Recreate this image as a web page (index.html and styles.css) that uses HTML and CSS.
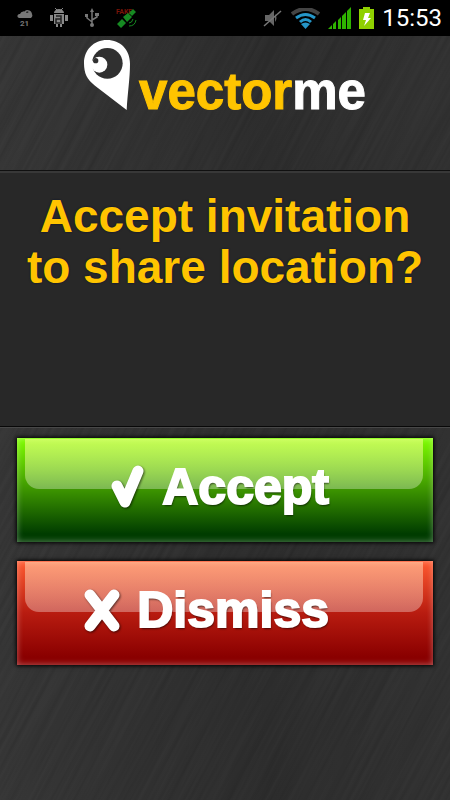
FILE: index.html
```html
<!DOCTYPE html>
<html lang="en">
<head>
    <meta charset="UTF-8">
    <meta name="viewport" content="width=device-width, initial-scale=1.0">
    <title>Vectorme</title>
    <link rel="stylesheet" href="styles.css">
</head>
<body>

    <div class="status-bar">
        <div class="status-group notifications">
            <svg width="16" height="18" viewBox="0 0 16 18" aria-hidden="true">
                <path d="M8 3a3.5 3.5 0 0 1 6 3" fill="none" stroke="#777" stroke-width="1.5"/>
                <path d="M2 9a2 2 0 0 1 1-4a4 4 0 0 1 7-1a3 3 0 0 1 4 5z" fill="#777"/>
                <text class="badge" x="3" y="17">21</text>
            </svg>
            <svg width="18" height="20" viewBox="0 0 18 20" aria-hidden="true">
                <path d="M5 0l2 2M13 0l-2 2" stroke="#888" stroke-width="1"/>
                <path d="M4 5a5 4 0 0 1 10 0zM4 6h10v10h-2v3h-2v-3h-2v3h-2v-3h-2zM0 7h3v6h-3zM15 7h3v6h-3z" fill="#888"/>
                <path d="M6 8h5v3h-5v4h6M11 11v3" fill="none" stroke="#222" stroke-width="1.5"/>
            </svg>
            <svg width="14" height="20" viewBox="0 0 14 20" aria-hidden="true">
                <path d="M7 2v15M7 14l-5-4v-3M7 12l5-3v-3" fill="none" stroke="#777" stroke-width="1.5"/>
                <path d="M7 0l2 4h-4zM0 6h3v3h-3zM10 5h4v3h-4z" fill="#777"/>
                <circle cx="7" cy="17" r="2" fill="#777"/>
            </svg>
            <svg width="22" height="20" viewBox="0 0 22 20" aria-hidden="true">
                <text class="fake" x="0" y="6">FAKE</text>
                <path d="M13 5l4-4l3 3l-4 4zM7 9l5-4l4 4l-5 5zM1 16l5-5l4 4l-5 5z" fill="#168a22"/>
                <path d="M13 15q3 0 4-4M13 18q6 0 7-6" fill="none" stroke="#168a22" stroke-width="1"/>
            </svg>
        </div>
        <div class="status-group">
            <svg width="20" height="20" viewBox="0 0 20 20" aria-hidden="true">
                <path d="M2 7h4l5-5v16l-5-5h-4zM12 6q3 4 0 8" fill="#666"/>
                <path d="M1 18L18 3" stroke="#777" stroke-width="1.5"/>
            </svg>
            <svg width="29" height="21" viewBox="0 0 29 21" aria-hidden="true">
                <path d="M1 6q13.500-10 27 0" fill="none" stroke="#444" stroke-width="4"/>
                <path d="M5 10q9.500-7 19 0M9 14q5.500-5 11 0" fill="none" stroke="#2596c8" stroke-width="3"/>
                <path d="M10 16q4.500-3 9 0l-4.500 5z" fill="#2596c8"/>
            </svg>
            <svg width="23" height="22" viewBox="0 0 23 22" aria-hidden="true">
                <path d="M0 22l4-4v4zM5 17l3-3v8h-3zM10 13l3-3v12h-3zM14 9l4-4v17h-4zM19 4l4-4v22h-4z" fill="#2fb300"/>
            </svg>
            <svg width="15" height="22" viewBox="0 0 15 22" aria-hidden="true">
                <path d="M4 0h7v2h4v20h-15v-20h4z" fill="#8fd000"/>
                <path d="M6 6h5l-2 5h3l-7 8l2-6h-3z" fill="#fff"/>
            </svg>
            <time class="clock">15:53</time>
        </div>
    </div>

    <header class="header">
        <svg class="pin" width="46" height="70" viewBox="42 17 138 210" aria-hidden="true">
            <path d="M111 17C151 17 180 46 180 88C180 130 173 175 170 227L75 154C51 136 42 117 42 87C42 47 71 17 111 17z" fill="#fff"/>
            <circle cx="112" cy="87" r="46" fill="#303030"/>
            <circle cx="88" cy="91" r="24" fill="#fff"/>
            <circle cx="77" cy="79" r="8" fill="#303030"/>
        </svg>
        <div class="brand">vector<span class="brand-me">me</span></div>
    </header>

    <main>
        <section class="message">
            <h1>Accept invitation<br>to share location?</h1>
        </section>

        <div class="actions">
            <button type="button" class="action accept">
                <svg width="36" height="44" viewBox="0 0 36 44" aria-hidden="true">
                    <path d="M8 21L16 37L29 6" class="mark"/>
                </svg>
                <span>Accept</span>
            </button>
            <button type="button" class="action dismiss">
                <svg width="36" height="44" viewBox="0 0 36 44" aria-hidden="true">
                    <path d="M6 7L30 38M30 7L6 38" class="mark"/>
                </svg>
                <span>Dismiss</span>
            </button>
        </div>
    </main>

</body>
</html>
```

FILE: styles.css
```css
* {
    box-sizing: border-box;
}

body {
    margin: 0;
    min-height: 100vh;
    font-family: "Arial Rounded MT Bold", "Liberation Sans", Arial, sans-serif;
    font-weight: bold;
    color: #fff;
    /* brushed metal */
    background:
        url("data:image/svg+xml,%3Csvg xmlns='http://www.w3.org/2000/svg' width='900' height='800'%3E%3Cfilter id='n' x='0' y='0' width='100%25' height='100%25'%3E%3CfeTurbulence type='fractalNoise' baseFrequency='.25 .006' numOctaves='3' seed='4'/%3E%3CfeColorMatrix values='0 0 0 0 0 0 0 0 0 0 0 0 0 0 0 .8 0 0 0 -.25'/%3E%3C/filter%3E%3Crect x='-400' y='-600' width='2000' height='2000' transform='rotate(28)' filter='url(%23n)' opacity='.28'/%3E%3C/svg%3E"),
        linear-gradient(to right, #383838, #2f2f2f 60%, #343434);
}

.status-bar {
    display: flex;
    justify-content: space-between;
    align-items: center;
    height: 36px;
    padding: 0 8px 0 17px;
    background-color: #000;
}

.status-group {
    display: flex;
    align-items: center;
    gap: 8px;
}

.notifications {
    gap: 17px;
}

.badge {
    font: bold 8px Roboto, sans-serif;
    fill: #777;
}

.fake {
    font: bold 7px Roboto, sans-serif;
    fill: #7a1408;
}

.clock {
    font: 24px Roboto, sans-serif;
}

.header {
    display: flex;
    justify-content: center;
    align-items: flex-start;
    gap: 9px;
    height: 134px;
    padding-top: 4px;
}

.brand {
    padding-top: 20px;
    font-size: 51px;
    line-height: 64px;
    color: #ffc400;
    -webkit-text-stroke: 1px currentColor;
}

.brand-me {
    color: #fff;
}

.message {
    min-height: 257px;
    padding: 20px 8px;
    text-align: center;
    background-color: #282828;
    border-top: 1px solid #101010;
    border-bottom: 1px solid #080808;
    box-shadow: inset 0 2px #383838, 0 1px #484848;
}

h1 {
    margin: 0;
    font-size: 46px;
    line-height: 51px;
    white-space: nowrap;
    color: #ffc400;
    text-shadow: 0 0 2px #001030;
}

.actions {
    display: flex;
    flex-direction: column;
    gap: 19px;
    padding: 11px 17px;
}

.action {
    position: relative;
    display: flex;
    justify-content: flex-end;
    align-items: center;
    gap: 17px;
    height: 104px;
    padding: 0 25% 6px 0;
    border: 0;
    font-family: inherit;
    font-size: 50px;
    font-weight: bold;
    color: #fff;
    cursor: pointer;
}

.accept {
    background: linear-gradient(#80ff00, #3c9400 50%, #003c00 92%);
    box-shadow: 0 0 4px 1px #000, inset 0 0 6px rgba(255, 255, 255, 0.4);
}

.dismiss {
    background: linear-gradient(#ff5a30, #b81c10 50%, #8a0000 92%);
    box-shadow: 0 0 4px 1px #000, inset 0 0 6px rgba(255, 255, 255, 0.4);
}

/* glossy highlight */
.action::before {
    content: "";
    position: absolute;
    top: 1px;
    left: 8px;
    right: 10px;
    height: 50px;
    border-radius: 0 0 14px 14px;
    background: linear-gradient(rgba(255, 255, 150, 0.55), rgba(255, 255, 255, 0.32));
}

.action.dismiss::before {
    background: linear-gradient(rgba(255, 225, 190, 0.5), rgba(255, 255, 255, 0.32));
}

.action span {
    position: relative;
    -webkit-text-stroke: 2px #fff;
    text-shadow: 1px 2px 2px rgba(0, 0, 0, 0.6);
}

.action svg {
    position: relative;
    filter: drop-shadow(1px 1px 1px rgba(0, 0, 0, 0.6));
}

.mark {
    fill: none;
    stroke: #fff;
    stroke-width: 11;
    stroke-linecap: round;
    stroke-linejoin: round;
}
```
